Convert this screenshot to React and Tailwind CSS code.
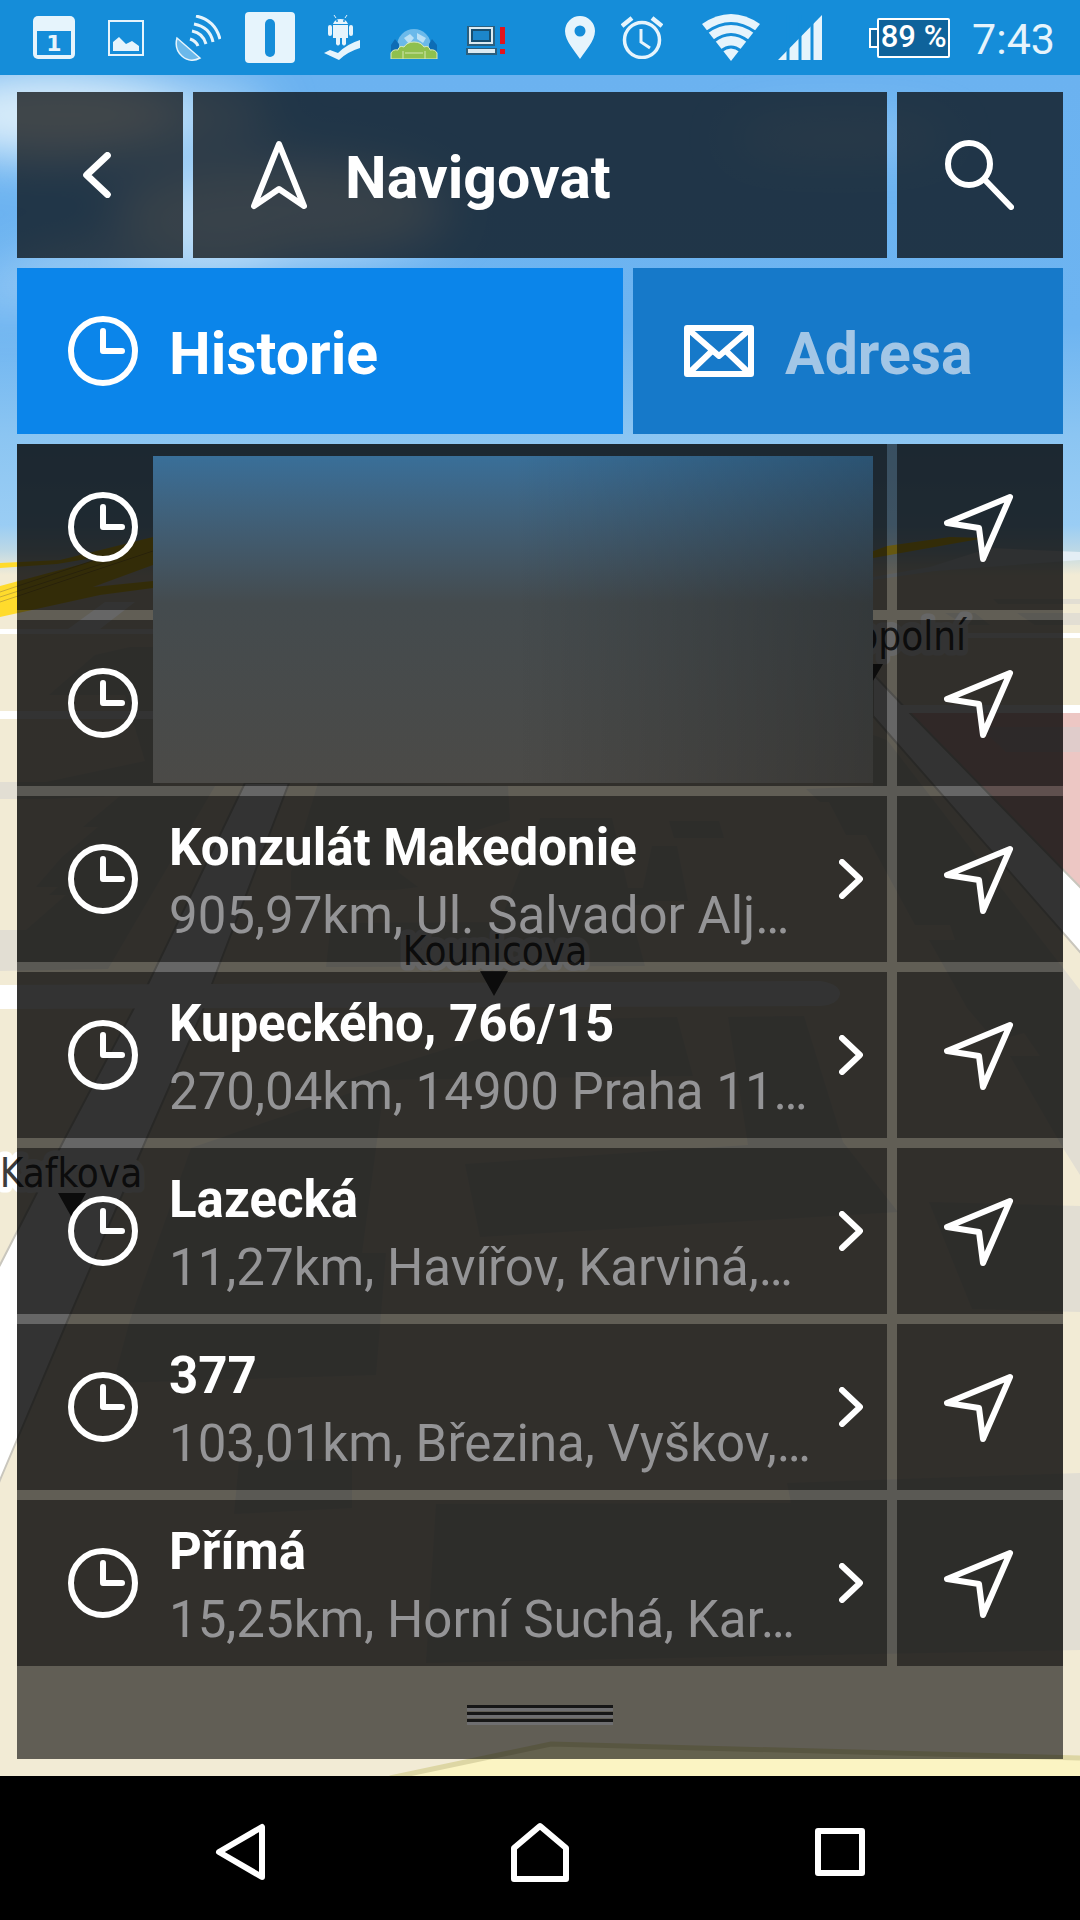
import React, { useState } from "react";

const history = [
  { id: 1, hidden: true },
  { id: 2, hidden: true },
  { id: 3, title: "Konzulát Makedonie", detail: "905,97km, Ul. Salvador Alj…" },
  { id: 4, title: "Kupeckého, 766/15", detail: "270,04km, 14900 Praha 11…" },
  { id: 5, title: "Lazecká", detail: "11,27km, Havířov, Karviná,…" },
  { id: 6, title: "377", detail: "103,01km, Březina, Vyškov,…" },
  { id: 7, title: "Přímá", detail: "15,25km, Horní Suchá, Kar…" },
];

const App = () => {
  const [tab, setTab] = useState("history");

  return (
    <div className="flex min-h-screen flex-col bg-black font-['Roboto',sans-serif] text-white">
      <StatusBar />
      <main className="relative flex-1 overflow-hidden p-[17px]">
        <MapBackground />
        <div className="relative flex flex-col gap-[10px]">
          <header className="flex gap-[10px]">
            <button aria-label="Zpět" className="flex h-[166px] w-[166px] items-center justify-center bg-black/70 pr-1.5">
              <ChevronIcon className="h-[46px] w-[28px] rotate-180" />
            </button>
            <div className="flex h-[166px] flex-1 items-center gap-[38px] bg-black/70 pl-[58px]">
              <HeadingIcon />
              <h1 className="pt-1.5 text-[59px] leading-[70px] font-bold">Navigovat</h1>
            </div>
            <button aria-label="Hledat" className="flex h-[166px] w-[166px] items-center justify-center bg-black/70 pr-0.5">
              <SearchIcon />
            </button>
          </header>

          <div role="tablist" className="grid grid-cols-[606fr_430fr] gap-[10px]">
            <button
              role="tab"
              aria-selected={tab === "history"}
              onClick={() => setTab("history")}
              className="flex h-[166px] items-center gap-[31px] bg-[#0b85ea] pl-[51px] text-[59px] leading-[70px] font-bold"
            >
              <ClockIcon />
              <span className="pt-1.5">Historie</span>
            </button>
            <button
              role="tab"
              aria-selected={tab === "address"}
              onClick={() => setTab("address")}
              className="flex h-[166px] items-center gap-[31px] bg-[#1679c9] pl-[51px] text-[59px] leading-[70px] font-bold"
            >
              <MailIcon />
              <span className="pt-1.5 text-[#a2c6e6]">Adresa</span>
            </button>
          </div>

          <section className="relative bg-black/60">
            <ul className="flex flex-col gap-[10px]">
              {history.map((item) => (
                <HistoryRow key={item.id} item={item} />
              ))}
            </ul>
            {/* Frosted cover over the two private entries */}
            <div className="absolute top-3 right-[190px] left-[136px] h-[327px] bg-linear-to-b from-[#396f99] via-[#444b4e] via-45% to-[#4b4a47]">
              <div className="h-full bg-linear-to-r from-transparent from-50% to-black/25" />
            </div>
            <button aria-label="Posunout panel" className="flex h-[93px] w-full flex-col items-center justify-center gap-px pt-1">
              <HandleLine />
              <HandleLine />
              <HandleLine />
            </button>
          </section>
        </div>
      </main>
      <NavBar />
    </div>
  );
};

const HistoryRow = ({ item }) => (
  <li className="flex gap-[10px]">
    <button
      aria-label={item.hidden ? "Skrytá položka" : undefined}
      className="flex h-[166px] min-w-0 flex-1 items-center bg-black/50 pr-6 pl-[51px] text-left"
    >
      <ClockIcon />
      {!item.hidden && (
        <>
          <span className="ml-[31px] flex min-w-0 flex-1 flex-col pt-1.5">
            <span className="truncate text-[51px] leading-[68px] font-bold">{item.title}</span>
            <span className="truncate text-[51px] leading-[68px] text-[#949496]">{item.detail}</span>
          </span>
          <ChevronIcon className="h-[40px] w-[24px] shrink-0" />
        </>
      )}
    </button>
    <button aria-label="Navigovat sem" className="flex h-[166px] w-[166px] items-center justify-center bg-black/50 pt-0.5 pr-0.5">
      <SendIcon />
    </button>
  </li>
);

const HandleLine = () => <span className="h-[6px] w-[146px] border-b-3 border-[#6e6e70] bg-[#161616]" />;

const ClockIcon = () => (
  <svg viewBox="0 0 70 70" className="h-[70px] w-[70px] shrink-0" fill="none" stroke="currentColor" strokeWidth="6" strokeLinecap="round" strokeLinejoin="round">
    <circle cx="35" cy="35" r="32" />
    <path d="M35 15V35H54" />
  </svg>
);

const ChevronIcon = ({ className }) => (
  <svg viewBox="0 0 24 40" className={className} fill="none" stroke="currentColor" strokeWidth="6" strokeLinecap="round" strokeLinejoin="round">
    <path d="M3 3L21 20L3 37" />
  </svg>
);

const SendIcon = () => (
  <svg viewBox="0 0 70 70" className="h-[70px] w-[70px]" fill="none" stroke="currentColor" strokeWidth="6" strokeLinecap="round" strokeLinejoin="round">
    <path d="M66 4L3 30L35 35L39 66Z" />
  </svg>
);

const HeadingIcon = () => (
  <svg viewBox="0 0 56 70" className="h-[70px] w-[56px] shrink-0" fill="none" stroke="currentColor" strokeWidth="6" strokeLinecap="round" strokeLinejoin="round">
    <path d="M28 4L53 66L28 49L3 66Z" />
  </svg>
);

const SearchIcon = () => (
  <svg viewBox="0 0 70 70" className="h-[70px] w-[70px]" fill="none" stroke="currentColor" strokeWidth="6" strokeLinecap="round">
    <circle cx="25" cy="24" r="21" />
    <path d="M41 40L67 67" />
  </svg>
);

const MailIcon = () => (
  <svg viewBox="0 0 70 52" className="h-[52px] w-[70px] shrink-0" fill="none" stroke="currentColor" strokeWidth="6" strokeLinejoin="round">
    <rect x="3" y="3" width="64" height="46" />
    <path d="M5 5L35 31L65 5M5 48L29 25M65 48L41 25" />
  </svg>
);

const StatusBar = () => (
  <div className="flex h-[75px] items-center bg-[#158dd9] pl-[18px] text-[#e6f4fc]">
    <StatusCell>
      <svg viewBox="0 0 42 43" className="h-[43px] w-[42px]">
        <rect width="42" height="43" rx="5" fill="currentColor" />
        <path d="M4 15H38V39H4Z" fill="#158dd9" />
        <text x="21" y="35" textAnchor="middle" fontSize="22" fontWeight="bold" fontFamily="DejaVu Sans" fill="currentColor">1</text>
      </svg>
    </StatusCell>
    <StatusCell>
      <svg viewBox="0 0 36 36" className="h-[36px] w-[36px]">
        <rect x="1" y="1" width="34" height="34" fill="none" stroke="currentColor" strokeWidth="2" />
        <path d="M5 31V22L11 17L18 24L24 21L31 26V31Z" fill="currentColor" />
      </svg>
    </StatusCell>
    <StatusCell>
      <svg viewBox="0 0 46 46" className="h-[46px] w-[46px]" fill="none" stroke="currentColor" strokeWidth="3">
        <path d="M2 23C-2 38 12 50 25 43Z" fill="#6bb8ea" strokeWidth="1.5" />
        <path d="M15 24Q21 26 23 31M17 16Q28 18 31 29M19 9Q35 12 38 27M21 1Q40 5 45 24" />
      </svg>
    </StatusCell>
    <StatusCell>
      <svg viewBox="0 0 50 51" className="h-[51px] w-[50px]">
        <rect width="50" height="51" rx="4" fill="currentColor" />
        <rect x="20" y="7" width="10" height="38" rx="5" fill="#158dd9" />
      </svg>
    </StatusCell>
    <StatusCell>
      <svg viewBox="0 0 36 46" className="h-[46px] w-[36px]" fill="currentColor">
        <path d="M9 9A8 7.500 0 0 1 24 9ZM9 10H24V23H9ZM4 12Q4 10 6 10T8 12V19Q8 21 6 21T4 19ZM25 12Q25 10 27 10T29 12V19Q29 21 27 21T25 19ZM12 22H16V29Q14 32 12 29ZM18 22H22V29Q20 32 18 29Z" />
        <path d="M12 3L10 0M21 3L23 0" stroke="currentColor" />
        <path d="M0 38L6 35L14 38Q23 29 36 25V33Q23 37 15 45Z" />
        <circle cx="13" cy="6" r="1" fill="#158dd9" />
        <circle cx="20" cy="6" r="1" fill="#158dd9" />
      </svg>
    </StatusCell>
    <StatusCell>
      <svg viewBox="0 0 48 30" className="mt-3 h-[30px] w-[48px]">
        <path d="M7 24V17A17 17 0 0 1 41 17V24Z" fill="#6bb9ea" />
        <path d="M14 9L20 5L24 9L19 15ZM27 4L36 9L33 14L27 10Z" fill="#b9e0f6" />
        <path d="M1 16L5 10L9 15V25H1ZM39 15L42 10L47 16V25H39Z" fill="#0d6cb5" />
        <path d="M1 30V24Q3 20 8 21Q9 16 14 18Q17 13 24 13T34 18Q39 16 40 21Q45 20 47 24V30Z" fill="#8fc04f" stroke="#dcebc0" strokeWidth="1" />
        <path d="M13 30V22M35 30V22M15 24H33" stroke="#d5e7b2" />
      </svg>
    </StatusCell>
    <StatusCell>
      <svg viewBox="0 0 40 30" className="mt-1 h-[30px] w-[40px]">
        <path d="M1 1H29V21H1ZM0 23H31V30H0Z" fill="#2b5f7e" />
        <path d="M3 2H27V19H3ZM2 24H29V28H2Z" fill="#dcebf2" />
        <rect x="6" y="5" width="18" height="11" fill="#1c86cb" stroke="#174e70" strokeWidth="2" />
        <path d="M34 2H39V19H34ZM34 24H39V29H34Z" fill="#e3141c" />
      </svg>
    </StatusCell>

    <div className="ml-auto flex items-center pr-[25px]">
      <svg viewBox="0 0 30 43" className="h-[43px] w-[30px]" fill="currentColor" fillRule="evenodd">
        <path d="M15 0A15 15 0 0 1 30 15C30 25 20 35 15 43C10 35 0 25 0 15A15 15 0 0 1 15 0ZM15 9.500A5.500 5.500 0 1 0 15 20.500A5.500 5.500 0 1 0 15 9.500Z" />
      </svg>
      <svg viewBox="0 0 42 43" className="ml-[26px] h-[43px] w-[42px]" fill="none" stroke="currentColor">
        <circle cx="21" cy="24" r="17.500" strokeWidth="3.500" />
        <path d="M20 13V26L29 32" strokeWidth="3" />
        <path d="M1 10L11 2M31 2L41 10" strokeWidth="4.500" />
      </svg>
      <svg viewBox="0 0 58 47" className="ml-[39px] h-[47px] w-[58px]">
        <path d="M29 47L0 10Q29 -10 58 10Z" fill="currentColor" />
        <path d="M5 18Q29 1 53 18M12 27Q29 14 46 27M19 37Q29 29 39 37" fill="none" stroke="#158dd9" strokeWidth="3" />
      </svg>
      <svg viewBox="0 0 44 45" className="ml-[18px] h-[45px] w-[44px]">
        <path d="M0 45L44 0V45Z" fill="currentColor" />
        <path d="M10 0V45M22 0V45M34 0V45" stroke="#158dd9" strokeWidth="3" />
      </svg>
      <div className="ml-[47px] flex items-center">
        <span className="h-5 w-2 border-2 border-r-0 border-white bg-[#0f639b]" />
        <span className="flex h-[40px] w-[73px] items-center justify-center rounded-xs border-2 border-white bg-[#0f639b] text-[31px] font-medium text-white">
          89 %
        </span>
      </div>
      <span className="ml-[22px] pt-0.5 text-[43px] leading-[48px]">7:43</span>
    </div>
  </div>
);

const StatusCell = ({ children }) => <span className="flex w-[72px] shrink-0 items-center justify-center">{children}</span>;

const NavBar = () => (
  <nav className="flex h-36 items-center bg-black px-[90px] pt-2">
    <button aria-label="Zpět v systému" className="flex flex-1 justify-center">
      <svg viewBox="0 0 50 58" className="h-[58px] w-[50px]" fill="none" stroke="currentColor" strokeWidth="6" strokeLinejoin="round">
        <path d="M47 4V54L4 29Z" />
      </svg>
    </button>
    <button aria-label="Domů" className="flex flex-1 justify-center">
      <svg viewBox="0 0 58 60" className="h-[60px] w-[58px]" fill="none" stroke="currentColor" strokeWidth="6" strokeLinejoin="round">
        <path d="M3 57V26L29 4L55 26V57Z" />
      </svg>
    </button>
    <button aria-label="Poslední aplikace" className="flex flex-1 justify-center">
      <svg viewBox="0 0 50 50" className="h-[50px] w-[50px]" fill="none" stroke="currentColor" strokeWidth="6" strokeLinejoin="round">
        <rect x="3" y="4" width="44" height="42" />
      </svg>
    </button>
  </nav>
);

// 3D map seen behind the translucent panels
const MapBackground = () => (
  <svg viewBox="0 75 1080 1701" preserveAspectRatio="xMidYMin slice" className="absolute inset-0 h-full w-full" aria-hidden="true">
    <defs>
      <linearGradient id="sky" x1="0" y1="75" x2="0" y2="575" gradientUnits="userSpaceOnUse">
        <stop offset="0" stopColor="#6bb2f0" />
        <stop offset="0.5" stopColor="#6db4f1" />
        <stop offset="0.72" stopColor="#8bc5f2" />
        <stop offset="0.9" stopColor="#9acdf4" />
        <stop offset="0.95" stopColor="#bcd8e6" />
        <stop offset="1" stopColor="#f2ebd5" />
      </linearGradient>
      <filter id="cloud" x="-50%" y="-100%" width="200%" height="300%">
        <feGaussianBlur stdDeviation="24" />
      </filter>
    </defs>
    <rect y="75" width="1080" height="1701" fill="#f2ebd5" />
    <rect y="75" width="1080" height="500" fill="url(#sky)" />
    <g filter="url(#cloud)" fill="#e6f3fb">
      <ellipse cx="50" cy="115" rx="130" ry="45" opacity="0.9" />
      <ellipse cx="180" cy="115" rx="90" ry="35" opacity="0.5" />
      <ellipse cx="280" cy="210" rx="170" ry="50" opacity="0.65" />
      <ellipse cx="150" cy="265" rx="130" ry="20" opacity="0.5" />
      <ellipse cx="840" cy="138" rx="110" ry="14" opacity="0.4" />
      <ellipse cx="10" cy="290" rx="50" ry="22" opacity="0.3" />
    </g>

    {/* motorway on the horizon */}
    <g fill="#ffdb2c">
      <path d="M0 563L60 560L153 537V548L57 564L0 568Z" />
      <path d="M0 586L153 545V565L93 587L153 581V588L100 595L0 617Z" />
      <path d="M860 556L887 546L950 537L985 538L873 558Z" />
    </g>
    <path d="M0 592L110 555M0 597L120 558M0 602L153 551" stroke="#c8ab35" fill="none" />

    {/* blocks */}
    <g fill="#e2ded3">
      <path d="M130 647H160V786H215L108 969L0 971V930H26L66 895H49L58 887H36L62 857L98 827H83L120 796L49 799H0V782H46L145 761L125 695H49L95 655Z" />
      <path d="M318 783L291 872V890H395L418 887L398 872L412 850L510 820L508 786Z" />
      <path d="M326 967L331 923L500 922L540 818H612L628 888H655V905H628L645 966Z" />
      <path d="M669 821H719L724 838H674ZM652 846H677L688 901H640Z" />
      <path d="M806 789L820 802H829L846 835H866L915 925H950L955 940H929L942 963L967 1008L995 1041L1024 1033L1040 1056H1010L1063 1148L1080 1175V990L887 740L873 735V786Z" />
      <path d="M728 1017L804 1016L843 1142L898 1212L480 1237L465 1164L748 1145Z" />
      <path d="M540 1020L677 1017L693 1076L375 1080L340 1082Z" />
      <path d="M191 1148L385 1081L362 1253H386L376 1375L113 1383L130 1320Z" />
      <path d="M239 1462L352 1458V1508L234 1514Z" />
      <path d="M929 1202L1080 1206V1312L972 1309Z" />
      <path d="M787 1483L1080 1473V1650L426 1663L436 1504L791 1503Z" />
      <path d="M993 599H1080V604H998ZM1017 613H1080V625H1035ZM945 613H975L990 625H965Z" />
    </g>

    {/* park */}
    <path d="M910 713H1080V890Z" fill="#edc7c4" />
    <path d="M980 727H1080V752H1006Z" fill="#e0cccb" />

    {/* streets */}
    <g fill="#fff" stroke="#c9c6bd" strokeWidth="2">
      <path d="M245 783L148 984L133 1010L65 1138L0 1265L-20 1300V1530L0 1480L67 1322L146 1140L203 1010L212 984L289 783Z" />
      <path d="M873 674L910 713L1080 887L1100 907V975L1080 952L873 716Z" />
    </g>
    <path d="M0 985L820 981Q840 984 840 994Q838 1005 820 1006L0 1009Z" fill="#fff" />
    <path d="M0 629H153V634H0ZM0 711H153V719H0ZM920 633H1080V638H920ZM895 705H1080V713H895Z" fill="#fff" />
    <path d="M105 602H135L100 629H68Z" fill="#fff" />
    <path d="M873 577L930 567L990 548L1080 552V560L935 571L873 580Z" fill="#e4eef5" />

    <path d="M400 1776L551 1744L1080 1758V1776Z" fill="#fbf4c3" />
    <path d="M390 1778L551 1744L1080 1758" fill="none" stroke="#ddd6a4" strokeWidth="5" />

    {/* street names */}
    <g fontFamily="'DejaVu Sans Condensed', 'DejaVu Sans', sans-serif" fontSize="40" fill="#3c3c3c" stroke="#fff" strokeWidth="11" strokeLinejoin="round" paintOrder="stroke">
      <text x="495" y="965" textAnchor="middle">Kounicova</text>
      <text x="71" y="1187" textAnchor="middle">Kafkova</text>
      <text x="966" y="650" textAnchor="end">opolní</text>
    </g>
    <path d="M480 971H508L494 996ZM58 1193H86L72 1218ZM860 664H883L870 686Z" fill="#3c3c3c" />
  </svg>
);

export default App;
